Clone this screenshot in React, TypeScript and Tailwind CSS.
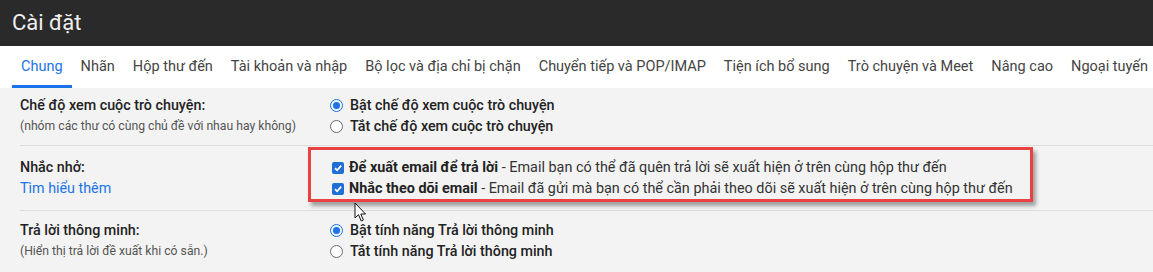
import React from 'react';

const tabs = [
  'Chung',
  'Nhãn',
  'Hộp thư đến',
  'Tài khoản và nhập',
  'Bộ lọc và địa chỉ bị chặn',
  'Chuyển tiếp và POP/IMAP',
  'Tiện ích bổ sung',
  'Trò chuyện và Meet',
  'Nâng cao',
  'Ngoại tuyến',
];

function Radio({ on }: { on?: boolean }) {
  return on ? (
    <span className="w-[13px] h-[13px] rounded-full border-[1.5px] border-[#1a73e8] flex items-center justify-center shrink-0">
      <span className="w-[7px] h-[7px] rounded-full bg-[#1a73e8]" />
    </span>
  ) : (
    <span className="w-[13px] h-[13px] rounded-full border border-[#6b6b6b] bg-white shrink-0" />
  );
}

function Check() {
  return (
    <span className="w-[12px] h-[12px] rounded-[2px] bg-[#1f6fd6] flex items-center justify-center shrink-0">
      <svg width="10" height="10" viewBox="0 0 10 10">
        <path d="M2 5.2 L4.1 7.3 L8.2 2.6" fill="none" stroke="white" strokeWidth="1.8" />
      </svg>
    </span>
  );
}

export default function App() {
  return (
    <div className="w-[1153px] h-[272px] overflow-hidden relative bg-[#f3f3f3] font-['Roboto','Liberation_Sans',sans-serif]">
      {/* header */}
      <div className="h-[46px] bg-[#2a2a2a] flex items-center pl-[12px] text-[22px] text-[#efefef] pb-[2px]">
        Cài đặt
      </div>

      {/* tabs */}
      <div className="h-[42px] bg-white flex pl-[12px]">
        {tabs.map((t, i) => (
          <div
            key={t}
            className={
              i === 0
                ? 'h-full flex items-center px-[9px] pt-[3px] border-b-[3px] border-[#1a73e8] text-[14.5px] text-[#1a73e8] whitespace-nowrap'
                : 'h-full flex items-center px-[9px] pt-[3px] border-b-[3px] border-transparent text-[14.5px] text-[#444] whitespace-nowrap'
            }
          >
            {t}
          </div>
        ))}
      </div>

      {/* sections */}
      <div className="ml-[20px]">
        <div className="flex pt-[7px] pb-[8px] border-b border-[#dddddd] leading-[21px]">
          <div className="w-[310px]">
            <div className="text-[14.3px] font-medium text-[#222]">Chế độ xem cuộc trò chuyện:</div>
            <div className="text-[12.2px] text-[#555]">(nhóm các thư có cùng chủ đề với nhau hay không)</div>
          </div>
          <div className="text-[14.3px] font-medium text-[#222]">
            <div className="flex items-center gap-[7px]"><Radio on />Bật chế độ xem cuộc trò chuyện</div>
            <div className="flex items-center gap-[7px]"><Radio />Tắt chế độ xem cuộc trò chuyện</div>
          </div>
        </div>

        <div className="flex pt-[11px] pb-[11px] border-b border-[#dddddd] leading-[21px]">
          <div className="w-[312px]">
            <div className="text-[14.3px] font-medium text-[#222]">Nhắc nhở:</div>
            <div className="text-[14.3px] text-[#1a73e8]">Tìm hiểu thêm</div>
          </div>
          <div className="text-[14.4px] text-[#333]">
            <div className="flex items-center gap-[5px]">
              <Check />
              <span><b className="font-bold text-[#222]">Để xuất email để trả lời</b> - Email bạn có thể đã quên trả lời sẽ xuất hiện ở trên cùng hộp thư đến</span>
            </div>
            <div className="flex items-center gap-[5px]">
              <Check />
              <span><b className="font-bold text-[#222]">Nhắc theo dõi email</b> - Email đã gửi mà bạn có thể cần phải theo dõi sẽ xuất hiện ở trên cùng hộp thư đến</span>
            </div>
          </div>
        </div>

        <div className="flex pt-[9px] leading-[21px]">
          <div className="w-[310px]">
            <div className="text-[14.3px] font-medium text-[#222]">Trả lời thông minh:</div>
            <div className="text-[12.2px] text-[#555]">(Hiển thị trả lời đề xuất khi có sẵn.)</div>
          </div>
          <div className="text-[14.3px] font-medium text-[#222]">
            <div className="flex items-center gap-[7px]"><Radio on />Bật tính năng Trả lời thông minh</div>
            <div className="flex items-center gap-[7px]"><Radio />Tắt tính năng Trả lời thông minh</div>
          </div>
        </div>
      </div>

      {/* annotation box */}
      <div className="absolute left-[308px] top-[147px] w-[725px] h-[55px] border-[3px] border-[#ea4242] shadow-[3px_4px_4px_rgba(0,0,0,0.35)] pointer-events-none" />

      {/* mouse cursor */}
      <svg className="absolute left-[354px] top-[202px]" width="14" height="21" viewBox="0 0 14 21">
        <path d="M1 1 L1 16 L4.5 12.7 L7.2 19 L9.4 18 L6.8 12 L11.5 12 Z" fill="white" stroke="#111" strokeWidth="1" strokeLinejoin="round" />
      </svg>
    </div>
  );
}
